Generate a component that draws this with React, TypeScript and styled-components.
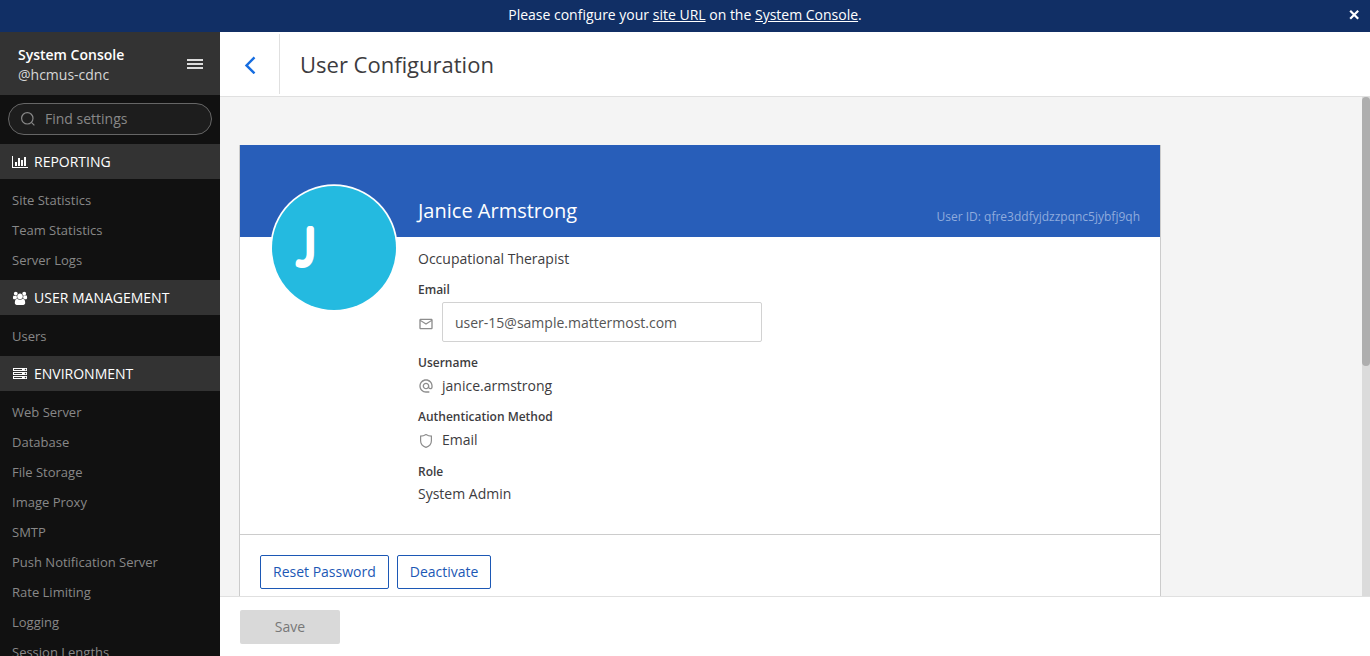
import React from 'react';
import styled, { createGlobalStyle } from 'styled-components';

const GlobalStyle = createGlobalStyle`
  *, *::before, *::after { box-sizing: border-box; }
  html, body, #root { height: 100%; }
  body {
    margin: 0;
    overflow: hidden;
    font-family: "Open Sans", sans-serif;
    font-size: 14px;
    line-height: 20px;
    color: #3d3c40;
    background: #fff;
  }
`;

const Page = styled.div`
  display: flex;
  flex-direction: column;
  height: 656px;
`;

const Banner = styled.div`
  flex: none;
  display: flex;
  align-items: center;
  height: 32px;
  padding: 0 10px 2px 0;
  color: #fff;
  background: #112f65;
`;

const BannerText = styled.div`
  flex: 1;
  padding-left: 22px;
  text-align: center;
  white-space: nowrap;
  a { color: #fff; text-decoration: underline; }
`;

const BannerClose = styled.button`
  display: flex;
  padding: 0;
  border: 0;
  background: none;
`;

const Body = styled.div`
  flex: 1;
  display: flex;
  min-height: 0;
`;

const Sidebar = styled.nav`
  flex: none;
  display: flex;
  flex-direction: column;
  width: 220px;
  overflow: hidden;
  background: #111;
`;

const TeamHeader = styled.header`
  flex: none;
  display: flex;
  align-items: center;
  justify-content: space-between;
  height: 63px;
  padding: 3px 17px 0 18px;
  background: #333;
`;

const TeamTitle = styled.div`
  font-weight: 600;
  line-height: 20px;
  color: #fff;
`;

const TeamUser = styled.div`
  line-height: 20px;
  color: #d6d6d6;
`;

const MenuIcon = styled.svg`
  width: 16px;
  height: 10px;
  margin-bottom: 2px;
  fill: #dcdcdc;
`;

const SearchBox = styled.div`
  flex: none;
  display: flex;
  align-items: center;
  gap: 9px;
  height: 32px;
  margin: 8px 8px 9px;
  padding: 0 12px 0 11px;
  border: 1px solid #666;
  border-radius: 16px;
  color: #888;
  background: #1d1d1d;
`;

const SectionTitle = styled.div`
  flex: none;
  display: flex;
  align-items: center;
  gap: 6px;
  height: 35px;
  padding: 0 12px;
  color: #fff;
  background: #333;
  svg { flex: none; width: 16px; height: 14px; fill: #fff; }
`;

const SectionList = styled.ul`
  flex: none;
  margin: 0;
  padding: 6px 0 5px;
  list-style: none;
`;

const SectionItem = styled.li`
  height: 30px;
  padding: 0 12px;
  font-size: 13px;
  line-height: 30px;
  color: #888;
`;

const Main = styled.main`
  flex: 1;
  display: flex;
  flex-direction: column;
  min-width: 0;
`;

const PageHeader = styled.header`
  flex: none;
  display: flex;
  height: 65px;
  padding: 2px 0;
  border-bottom: 1px solid #e0e0e0;
`;

const BackLink = styled.div`
  display: flex;
  align-items: center;
  justify-content: center;
  width: 60px;
  padding-top: 2px;
  border-right: 1px solid #e0e0e0;
`;

const PageTitle = styled.h1`
  margin: 0;
  padding-left: 20px;
  font-size: 22px;
  font-weight: 400;
  line-height: 61px;
`;

const ScrollArea = styled.div`
  flex: 1;
  display: flex;
  min-height: 0;
  background: #f4f4f4;
`;

const ScrollContent = styled.div`
  flex: 1;
  padding: 48px 20px 0;
  overflow: hidden;
`;

const ScrollTrack = styled.div`
  width: 8px;
  background: #dbdbdb;
`;

const ScrollThumb = styled.div`
  height: 269px;
  border-radius: 4px;
  background: #aeaeae;
`;

const Card = styled.section`
  width: 920px;
  background: #fff;
  box-shadow: 0 1px 0 1px #ccc;
`;

const CardTop = styled.div`
  display: flex;
  align-items: flex-end;
  height: 92px;
  padding: 0 20px 12px 178px;
  color: #fff;
  background: #285eb9;
`;

const UserName = styled.div`
  flex: 1;
  font-size: 20px;
  line-height: 28px;
`;

const UserId = styled.div`
  font-size: 12px;
  line-height: 16px;
  color: #8fabdd;
`;

const CardBody = styled.div`
  display: flex;
  height: 297px;
  padding-left: 30px;
`;

const Avatar = styled.svg`
  flex: none;
  position: relative;
  top: -53px;
  width: 128px;
  height: 128px;
`;

const Details = styled.div`
  flex: 1;
  padding: 12px 0 0 20px;
`;

const Position = styled.div`
  margin-bottom: 13px;
  line-height: 20px;
`;

const FieldLabel = styled.div`
  font-size: 12px;
  font-weight: 600;
  line-height: 16px;
`;

const FieldRow = styled.div<{ $height: number; $after: number }>`
  display: flex;
  align-items: center;
  gap: 8px;
  height: ${p => p.$height}px;
  margin-bottom: ${p => p.$after}px;
`;

const FieldIcon = styled.svg<{ $drop: number }>`
  flex: none;
  width: 16px;
  height: 16px;
  margin-top: ${p => p.$drop}px;
  fill: #8d8d8d;
`;

const EmailInput = styled.input`
  width: 320px;
  height: 40px;
  padding: 0 12px;
  border: 1px solid #d2d2d2;
  border-radius: 2px;
  font: inherit;
  color: #555;
  background: #fff;
  outline: none;
`;

const CardActions = styled.div`
  display: flex;
  gap: 8px;
  height: 120px;
  padding: 20px;
  border-top: 1px solid #ccc;
`;

const OutlineButton = styled.button`
  height: 34px;
  padding: 0 12px;
  border: 1px solid #1c58b5;
  border-radius: 2px;
  font: inherit;
  color: #1c58b5;
  background: #fff;
`;

const Footer = styled.footer`
  flex: none;
  height: 60px;
  padding: 13px 20px;
  border-top: 1px solid #e0e0e0;
`;

const SaveButton = styled.button`
  width: 100px;
  height: 34px;
  border: 0;
  border-radius: 2px;
  font: inherit;
  color: #777;
  background: #d9d9d9;
`;

const ChartIcon = () => (
  <svg viewBox="0 0 2048 1792">
    <path d="M640 896v512h-256v-512h256zM1024 384v1024h-256v-1024h256zM2048 1536v128h-2048v-1536h128v1408h1920zM1408 640v768h-256v-768h256zM1792 256v1152h-256v-1152h256z" />
  </svg>
);

const UsersIcon = () => (
  <svg viewBox="-64 -96 2176 1904">
    <path d="M657 896q-162 5-265 128h-134q-82 0-138-40.5t-56-118.5q0-353 124-353 6 0 43.5 21t97.5 42.5 119 21.5q67 0 133-23-5 37-5 66 0 159 93 293zm1071 637q0 120-73 189.5t-194 69.5h-874q-121 0-194-69.5t-73-189.5q0-53 3.5-103.5t14-109 26.5-108.5 43-97.5 62-81 85.5-53.5 111.5-20q10 0 43 21.5t73 48 107 48 135 21.5 135-21.5 107-48 73-48 43-21.5q61 0 111.5 20t85.5 53.5 62 81 43 97.5 26.5 108.5 14 109 3.5 103.5zm-1024-1277q0 106-75 181t-181 75-181-75-75-181 75-181 181-75 181 75 75 181zm704 384q0 159-112.5 271.5t-271.5 112.5-271.5-112.5-112.5-271.5 112.5-271.5 271.5-112.5 271.5 112.5 112.5 271.5zm576 225q0 78-56 118.5t-138 40.5h-134q-103-123-265-128 93-134 93-293 0-29-5-66 66 23 133 23 59 0 119-21.5t97.5-42.5 43.5-21q124 0 124 353zm-128-609q0 106-75 181t-181 75-181-75-75-181 75-181 181-75 181 75 75 181z" />
  </svg>
);

const ServerIcon = () => (
  <svg viewBox="0 0 1792 1792">
    <path d="M128 1408h1024v-128h-1024v128zm0-512h1024v-128h-1024v128zm1568 448q0-40-28-68t-68-28-68 28-28 68 28 68 68 28 68-28 28-68zm-1568-960h1024v-128h-1024v128zm1568 448q0-40-28-68t-68-28-68 28-28 68 28 68 68 28 68-28 28-68zm0-512q0-40-28-68t-68-28-68 28-28 68 28 68 68 28 68-28 28-68zm96 832v384h-1792v-384h1792zm0-512v384h-1792v-384h1792zm0-512v384h-1792v-384h1792z" />
  </svg>
);

const sections = [
  { title: 'REPORTING', icon: <ChartIcon />, items: ['Site Statistics', 'Team Statistics', 'Server Logs'] },
  { title: 'USER MANAGEMENT', icon: <UsersIcon />, items: ['Users'] },
  {
    title: 'ENVIRONMENT',
    icon: <ServerIcon />,
    items: [
      'Web Server', 'Database', 'File Storage', 'Image Proxy', 'SMTP',
      'Push Notification Server', 'Rate Limiting', 'Logging', 'Session Lengths',
    ],
  },
];

export default function App() {
  return (
    <Page>
      <GlobalStyle />
      <Banner>
        <BannerText>
          Please configure your <a>site URL</a> on the <a>System Console</a>.
        </BannerText>
        <BannerClose aria-label="Close">
          <svg width="12" height="12" viewBox="0 0 12 12" stroke="#fff" strokeWidth="2.2">
            <path d="M2.2 1.7l8 8M10.2 1.7l-8 8" />
          </svg>
        </BannerClose>
      </Banner>
      <Body>
        <Sidebar>
          <TeamHeader>
            <div>
              <TeamTitle>System Console</TeamTitle>
              <TeamUser>@hcmus-cdnc</TeamUser>
            </div>
            <MenuIcon viewBox="0 0 16 10">
              <path d="M0 0h16v2H0zM0 4h16v2H0zM0 8h16v2H0z" />
            </MenuIcon>
          </TeamHeader>
          <SearchBox>
            <svg width="16" height="16" viewBox="0 0 16 16" fill="none" stroke="#888" strokeWidth="1.2">
              <circle cx="7.3" cy="7.3" r="5.7" />
              <path d="M11.4 11.4l3 3" />
            </svg>
            Find settings
          </SearchBox>
          {sections.map(s => (
            <React.Fragment key={s.title}>
              <SectionTitle>{s.icon}{s.title}</SectionTitle>
              <SectionList>
                {s.items.map(i => <SectionItem key={i}>{i}</SectionItem>)}
              </SectionList>
            </React.Fragment>
          ))}
        </Sidebar>
        <Main>
          <PageHeader>
            <BackLink>
              <svg width="12" height="18" viewBox="0 0 12 18" fill="none" stroke="#166de0" strokeWidth="2.4">
                <path d="M10.5 1.4L2.5 9.4l8 8" />
              </svg>
            </BackLink>
            <PageTitle>User Configuration</PageTitle>
          </PageHeader>
          <ScrollArea>
            <ScrollContent>
              <Card>
                <CardTop>
                  <UserName>Janice Armstrong</UserName>
                  <UserId>User ID: qfre3ddfyjdzzpqnc5jybfj9qh</UserId>
                </CardTop>
                <CardBody>
                  <Avatar viewBox="0 0 128 128">
                    <circle cx="64" cy="64" r="63.7" fill="#fff" />
                    <circle cx="64" cy="64" r="62" fill="#24bae0" />
                    <text
                      transform="translate(27.4 81) scale(0.84 1)"
                      fontFamily="Lato" fontSize="52" fontWeight="300" fill="#fff"
                      stroke="#fff" strokeWidth="6" strokeLinejoin="round"
                    >J</text>
                  </Avatar>
                  <Details>
                    <Position>Occupational Therapist</Position>
                    <FieldLabel>Email</FieldLabel>
                    <FieldRow $height={48} $after={9}>
                      <FieldIcon $drop={3} viewBox="0 0 24 24">
                        <path d="M22 6C22 4.9 21.1 4 20 4H4C2.9 4 2 4.9 2 6V18C2 19.1 2.9 20 4 20H20C21.1 20 22 19.1 22 18V6M20 6L12 11L4 6H20M20 18H4V8L12 13L20 8V18Z" />
                      </FieldIcon>
                      <EmailInput defaultValue="user-15@sample.mattermost.com" />
                    </FieldRow>
                    <FieldLabel>Username</FieldLabel>
                    <FieldRow $height={30} $after={8}>
                      <FieldIcon $drop={0} viewBox="0 0 24 24">
                        <path d="M12 15C12.81 15 13.5 14.7 14.11 14.11C14.7 13.5 15 12.81 15 12C15 11.19 14.7 10.5 14.11 9.89C13.5 9.3 12.81 9 12 9C11.19 9 10.5 9.3 9.89 9.89C9.3 10.5 9 11.19 9 12C9 12.81 9.3 13.5 9.89 14.11C10.5 14.7 11.19 15 12 15M12 2C14.75 2 17.1 3 19.05 4.95C21 6.9 22 9.25 22 12V13.45C22 14.45 21.65 15.3 21 16C20.3 16.67 19.5 17 18.5 17C17.3 17 16.31 16.5 15.56 15.5C14.56 16.5 13.38 17 12 17C10.63 17 9.45 16.5 8.46 15.54C7.5 14.55 7 13.38 7 12C7 10.63 7.5 9.45 8.46 8.46C9.45 7.5 10.63 7 12 7C13.37 7 14.55 7.5 15.54 8.46C16.5 9.45 17 10.63 17 12V13.45C17 13.86 17.16 14.22 17.46 14.53C17.76 14.84 18.11 15 18.5 15C18.92 15 19.27 14.84 19.57 14.53C19.87 14.22 20 13.86 20 13.45V12C20 9.81 19.23 7.93 17.65 6.35C16.07 4.77 14.19 4 12 4C9.81 4 7.93 4.77 6.35 6.35C4.77 7.93 4 9.81 4 12C4 14.19 4.77 16.07 6.35 17.65C7.93 19.23 9.81 20 12 20H17V22H12C9.25 22 6.9 21 4.95 19.05C3 17.1 2 14.75 2 12C2 9.25 3 6.9 4.95 4.95C6.9 3 9.25 2 12 2Z" />
                      </FieldIcon>
                      janice.armstrong
                    </FieldRow>
                    <FieldLabel>Authentication Method</FieldLabel>
                    <FieldRow $height={30} $after={9}>
                      <FieldIcon $drop={2} viewBox="0 0 16 16">
                        <path fill="none" stroke="#8d8d8d" strokeWidth="1.2" d="M8 1.6C6.6 2.5 4.3 3.2 2.6 3.2V7.8C2.6 10.9 4.8 13.3 8 14.4C11.2 13.3 13.4 10.9 13.4 7.8V3.2C11.7 3.2 9.4 2.5 8 1.6Z" />
                      </FieldIcon>
                      Email
                    </FieldRow>
                    <FieldLabel>Role</FieldLabel>
                    <FieldRow $height={28} $after={0}>System Admin</FieldRow>
                  </Details>
                </CardBody>
                <CardActions>
                  <OutlineButton>Reset Password</OutlineButton>
                  <OutlineButton>Deactivate</OutlineButton>
                </CardActions>
              </Card>
            </ScrollContent>
            <ScrollTrack>
              <ScrollThumb />
            </ScrollTrack>
          </ScrollArea>
          <Footer>
            <SaveButton>Save</SaveButton>
          </Footer>
        </Main>
      </Body>
    </Page>
  );
}
